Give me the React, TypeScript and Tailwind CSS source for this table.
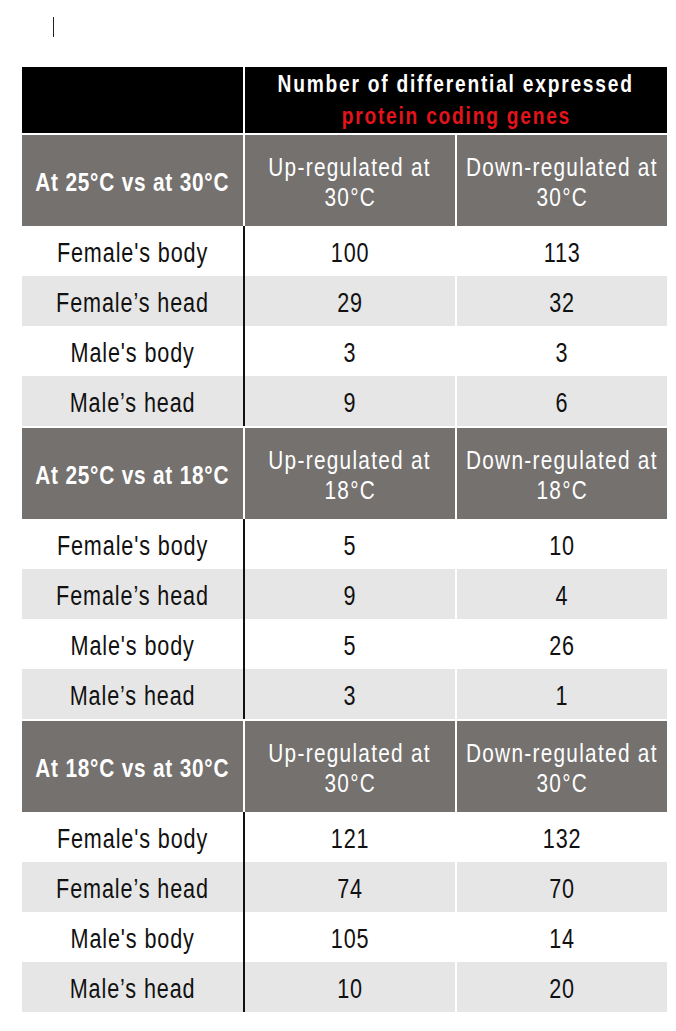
const font = { fontFamily: '"Liberation Sans", Arial, sans-serif' };

type Row = { label: string; up: string; down: string };

type Section = { title: string; temp: string; rows: Row[] };

const sections: Section[] = [
  {
    title: "At 25°C vs at 30°C",
    temp: "30°C",
    rows: [
      { label: "Female's body", up: "100", down: "113" },
      { label: "Female’s head", up: "29", down: "32" },
      { label: "Male's body", up: "3", down: "3" },
      { label: "Male’s head", up: "9", down: "6" },
    ],
  },
  {
    title: "At 25°C vs at 18°C",
    temp: "18°C",
    rows: [
      { label: "Female's body", up: "5", down: "10" },
      { label: "Female’s head", up: "9", down: "4" },
      { label: "Male's body", up: "5", down: "26" },
      { label: "Male’s head", up: "3", down: "1" },
    ],
  },
  {
    title: "At 18°C vs at 30°C",
    temp: "30°C",
    rows: [
      { label: "Female's body", up: "121", down: "132" },
      { label: "Female’s head", up: "74", down: "70" },
      { label: "Male's body", up: "105", down: "14" },
      { label: "Male’s head", up: "10", down: "20" },
    ],
  },
];

// narrow face: Arial squeezed horizontally
function Narrow({ children, className = "" }: { children: React.ReactNode; className?: string }) {
  return <span className={`inline-block scale-x-[0.8] whitespace-nowrap ${className}`}>{children}</span>;
}

function SectionHeader({ title, temp }: { title: string; temp: string }) {
  return (
    <div className="mt-[2px] flex h-[91px] text-white">
      <div className="flex w-[223px] shrink-0 items-center justify-center border-r-2 border-white bg-[#74716f] pt-[3px] text-[26px] font-bold tracking-[1px]">
        <Narrow>{title}</Narrow>
      </div>
      <div className="flex w-[212px] shrink-0 flex-col items-center justify-center border-r-2 border-white bg-[#74716f] pt-[2px] text-center text-[26px] leading-[30px] tracking-[1.6px]">
        <Narrow>Up-regulated at</Narrow>
        <Narrow>{temp}</Narrow>
      </div>
      <div className="flex min-w-0 flex-1 flex-col items-center justify-center bg-[#74716f] pt-[2px] text-center text-[26px] leading-[30px] tracking-[1.6px]">
        <Narrow>Down-regulated at</Narrow>
        <Narrow>{temp}</Narrow>
      </div>
    </div>
  );
}

function DataRow({ row, shaded }: { row: Row; shaded: boolean }) {
  const bg = shaded ? "bg-[#e6e6e6]" : "bg-white";
  return (
    <div className={`flex h-[50px] text-[27px] text-[#111] tracking-[1.1px] ${bg}`}>
      <div className="flex w-[223px] shrink-0 items-center justify-center border-r-2 border-[#111] pt-[4px]">
        <Narrow>{row.label}</Narrow>
      </div>
      <div className="flex w-[212px] shrink-0 items-center justify-center border-r-2 border-white pt-[4px]">
        <Narrow>{row.up}</Narrow>
      </div>
      <div className="flex min-w-0 flex-1 items-center justify-center pt-[4px]">
        <Narrow>{row.down}</Narrow>
      </div>
    </div>
  );
}

export default function App() {
  return (
    <div className="min-h-[1031px] w-[676px] bg-white" style={font}>
      <div className="h-[67px] pt-[17px] pl-[53px]">
        <div className="h-[20px] w-[1px] bg-[#222]" />
      </div>
      <div className="ml-[22px] w-[645px]">
        <div className="flex h-[66px]">
          <div className="w-[223px] shrink-0 border-r-2 border-white bg-black" />
          <div className="flex min-w-0 flex-1 flex-col items-center justify-center bg-black text-[24px] font-bold leading-[32px] tracking-[2.2px]">
            <Narrow className="text-white">Number of differential expressed</Narrow>
            <Narrow className="text-[#e3141b]">protein coding genes</Narrow>
          </div>
        </div>
        {sections.map((s) => (
          <div key={s.title}>
            <SectionHeader title={s.title} temp={s.temp} />
            {s.rows.map((r, i) => (
              <DataRow key={r.label} row={r} shaded={i % 2 === 1} />
            ))}
          </div>
        ))}
      </div>
    </div>
  );
}
